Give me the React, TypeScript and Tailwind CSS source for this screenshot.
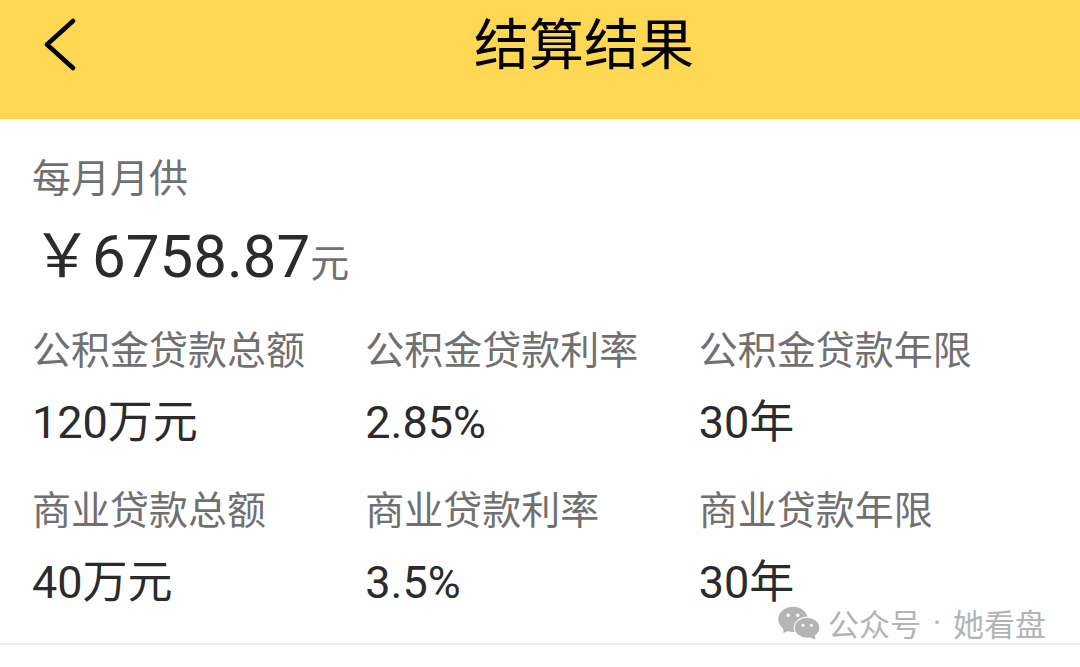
import React from 'react';

const loanDetails = [
  { label: '公积金贷款总额', value: '120万元' },
  { label: '公积金贷款利率', value: '2.85%' },
  { label: '公积金贷款年限', value: '30年' },
  { label: '商业贷款总额', value: '40万元' },
  { label: '商业贷款利率', value: '3.5%' },
  { label: '商业贷款年限', value: '30年' },
];

const Header: React.FC = () => (
  <header className="flex h-[119px] items-start bg-[#ffd853] text-black">
    <button type="button" aria-label="返回" className="mt-4 w-[88px] pl-11">
      <svg viewBox="0 0 32 56" className="h-14 w-8" fill="none" stroke="currentColor" strokeWidth="4.500" strokeLinecap="round" strokeLinejoin="round">
        <path d="M29 5 3 28.500 29 52" />
      </svg>
    </button>
    <h1 className="mt-1 flex-1 text-center text-[55px] leading-[72px]">结算结果</h1>
  </header>
);

// two overlapping chat bubbles
const WechatIcon: React.FC = () => (
  <svg viewBox="0 0 42 34" className="h-[34px] w-[42px]" fill="currentColor" aria-hidden="true">
    <ellipse cx="15" cy="13.300" rx="14.700" ry="12.600" />
    <path d="M5 20.500 5.500 27 12.500 24z" />
    <ellipse cx="29" cy="21.700" rx="13.300" ry="11" fill="#fefefe" />
    <ellipse cx="29" cy="21.700" rx="12.300" ry="10" />
    <path d="M31 31 37.500 33.500 36.500 27z" />
    <g fill="#fefefe">
      <circle cx="10.300" cy="9.200" r="1.800" />
      <circle cx="19.700" cy="9.200" r="1.800" />
      <circle cx="25" cy="19.300" r="1.500" />
      <circle cx="33.500" cy="19.300" r="1.500" />
    </g>
  </svg>
);

const App: React.FC = () => {
  return (
    <div className="min-h-screen bg-[#fefefe] font-['Noto_Sans_CJK_SC',sans-serif] text-[#2b2b2b]">
      <Header />

      <main className="relative border-b-2 border-[#ececec] pt-8 pr-12 pb-7 pl-8">
        <h2 className="text-[39px] leading-[48px] text-[#707070]">每月月供</h2>
        <p className="mt-5 font-[Roboto,'Noto_Sans_CJK_SC',sans-serif] text-[60px] leading-[76px]">
          {'\uffe5'}6758.87<span className="text-[39px] leading-none text-[#707070]">元</span>
        </p>

        <dl className="mt-7 grid grid-cols-3 gap-y-7">
          {loanDetails.map((item) => (
            <div key={item.label}>
              <dt className="text-[39px] leading-[48px] whitespace-nowrap text-[#707070]">{item.label}</dt>
              <dd className="mt-5 font-[Roboto,'Noto_Sans_CJK_SC',sans-serif] text-[45px] leading-[64px]">{item.value}</dd>
            </div>
          ))}
        </dl>

        {/* account watermark */}
        <div className="absolute right-[34px] bottom-0 flex items-center gap-2 text-[#b4b4b4]">
          <WechatIcon />
          <div className="flex items-center gap-3 text-[31px] leading-[40px]">
            <span>公众号</span>
            <span className="font-[Roboto,sans-serif] leading-none">·</span>
            <span>她看盘</span>
          </div>
        </div>
      </main>
    </div>
  );
};

export default App;
